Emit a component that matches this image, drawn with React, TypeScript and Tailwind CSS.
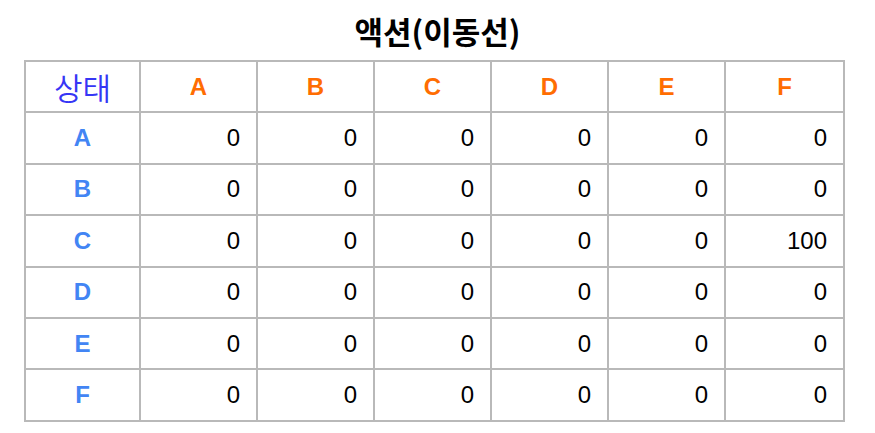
const cols = ['A', 'B', 'C', 'D', 'E', 'F'];

const values: Record<string, number[]> = {
  A: [0, 0, 0, 0, 0, 0],
  B: [0, 0, 0, 0, 0, 0],
  C: [0, 0, 0, 0, 0, 100],
  D: [0, 0, 0, 0, 0, 0],
  E: [0, 0, 0, 0, 0, 0],
  F: [0, 0, 0, 0, 0, 0],
};

export default function App() {
  return (
    <div
      className="w-[875px] h-[433px] bg-white pl-[24px]"
      style={{ fontFamily: '"Liberation Sans", Arial, "Noto Sans CJK KR", sans-serif' }}
    >
      <div className="w-[821px]">
        {/* 제목 */}
        <div className="h-[60px] flex items-center justify-center pl-[6px]">
          <h1 className="text-[31px] font-bold text-black leading-none" style={{ fontFamily: '"Noto Sans CJK KR", "Liberation Sans", sans-serif' }}>
            액션(이동선)
          </h1>
        </div>
        {/* 표 */}
        <div className="grid grid-cols-[113px_115px_115px_115px_115px_115px_117px] gap-[2px] p-[2px] bg-[#b9b9b9] auto-rows-[49.4px]">
          <div className="bg-white flex items-center justify-center">
            <span
              className="text-[31px] text-[#3636f5] leading-none"
              style={{ fontFamily: '"Noto Sans CJK KR", sans-serif', fontWeight: 350 }}
            >
              상태
            </span>
          </div>
          {cols.map((c) => (
            <div key={c} className="bg-white flex items-center justify-center text-[24px] font-bold text-[#ff6d01]">
              {c}
            </div>
          ))}
          {cols.map((row) => (
            <>
              <div key={row} className="bg-white flex items-center justify-center text-[24px] font-bold text-[#4285f4]">
                {row}
              </div>
              {values[row].map((v, i) => (
                <div key={row + i} className="bg-white flex items-center justify-end pr-[16px] text-[24px] text-black">
                  {v}
                </div>
              ))}
            </>
          ))}
        </div>
      </div>
    </div>
  );
}
